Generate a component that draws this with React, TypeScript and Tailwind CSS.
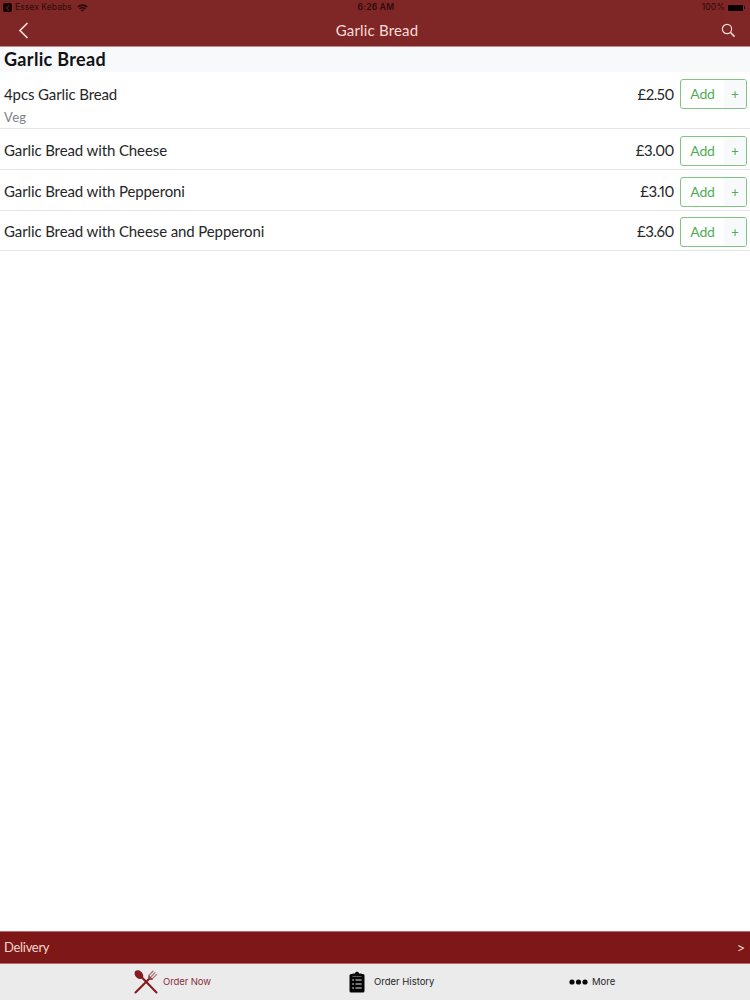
import { useState } from "react";

interface MenuItem {
  id: number;
  name: string;
  note?: string;
  price: number;
}

const items: MenuItem[] = [
  { id: 1, name: "4pcs Garlic Bread", note: "Veg", price: 2.5 },
  { id: 2, name: "Garlic Bread with Cheese", price: 3 },
  { id: 3, name: "Garlic Bread with Pepperoni", price: 3.1 },
  { id: 4, name: "Garlic Bread with Cheese and Pepperoni", price: 3.6 },
];

// ================= ICONS =================
function WifiIcon() {
  return (
    <svg width="11" height="8" viewBox="0 0 11 8" fill="none" stroke="#2a0b0b" strokeWidth="1.7">
      <path d="M0.8 3C3.5 0.5 7.5 0.5 10.2 3" />
      <path d="M2.6 4.8C4.3 3.3 6.7 3.3 8.4 4.8" />
      <path d="M5.5 7.8L3.9 6.2C4.8 5.4 6.2 5.4 7.1 6.2Z" fill="#2a0b0b" stroke="none" />
    </svg>
  );
}

function CutleryIcon() {
  return (
    <svg width="24" height="24" viewBox="0 0 24 24">
      <ellipse cx="4.9" cy="4.6" rx="3.6" ry="5" transform="rotate(-45 4.9 4.6)" fill="#861c20" />
      <path d="M7.5 7L22.5 22.5" stroke="#861c20" strokeWidth="2.1" strokeLinecap="round" />
      <path d="M1.5 22.5L15.5 8.5" stroke="#861c20" strokeWidth="2.1" strokeLinecap="round" />
      <path
        d="M15 5.4L18.9 1.3M17.2 6.6L21 2.6M18.6 8.4L22.6 4.6"
        fill="none"
        stroke="#a87774"
        strokeWidth="1.3"
        strokeLinecap="round"
      />
      <path d="M14.6 5L19.2 9.2C17.4 11 12.8 9.6 14.6 5Z" fill="#954448" />
    </svg>
  );
}

function ClipboardIcon() {
  return (
    <svg width="16" height="22" viewBox="0 0 16 22">
      <rect x="0.5" y="3" width="15" height="18.5" rx="1.5" fill="#050505" />
      <path d="M3.5 5V2.5H6C6 0 10 0 10 2.5H12.5V5Z" fill="#050505" />
      <path d="M3.5 5.5H12.5" stroke="#85817f" strokeWidth="0.7" />
      <path d="M3.2 9H5M3.2 13H5M3.2 17H5M6.5 9H12.7M6.5 13H12.7M6.5 17H12.7" stroke="#e5e2e0" strokeWidth="1.2" />
    </svg>
  );
}

export default function App() {
  const [basket, setBasket] = useState<number[]>([]);

  const addItem = (id: number) => {
    setBasket((prev) => [...prev, id]);
  };

  return (
    <div className="flex h-screen flex-col bg-white font-['Lato',sans-serif] text-[#252628]">
      {/* HEADER */}
      <header className="h-[47px] shrink-0 border-b border-[#bb8b8b] bg-[#7f2626]">
        <div className="grid h-[15px] grid-cols-3 items-center pr-[5px] pl-[3px] font-['Inter',sans-serif] text-[8px] text-[#2f0b0b]">
          <div className="flex items-center">
            <span className="flex h-[9px] w-[9px] items-center justify-center rounded-[2px] bg-[#160505]">
              <svg width="5" height="6" viewBox="0 0 5 6" fill="none" stroke="#7f2626">
                <path d="M4 0.7L1.3 3L4 5.3" />
              </svg>
            </span>
            <span className="ml-[3px] text-[8.5px] tracking-[0.08px]">Essex Kebabs</span>
            <span className="ml-[5px]">
              <WifiIcon />
            </span>
          </div>
          <span className="pl-1 text-center text-[8.5px] font-semibold tracking-[0.25px]">6:26 AM</span>
          <div className="flex items-center justify-end">
            <span className="mr-[3px] text-[8.5px] tracking-[0.2px]">100%</span>
            <span className="h-[6px] w-[15px] rounded-[1px] bg-[#080202]" />
            <span className="ml-px h-[3px] w-px bg-[#2f0b0b]" />
          </div>
        </div>
        <div className="grid h-[31px] grid-cols-[40px_1fr_36px] items-center text-[#f8dcd5]">
          <button className="pl-[18px]" aria-label="Back">
            <svg width="11" height="17" viewBox="0 0 11 17" fill="none" stroke="currentColor" strokeWidth="1.7">
              <path d="M9.5 1L2 8.5L9.5 16" />
            </svg>
          </button>
          <h1 className="text-center text-[15px] tracking-[0.18px]">Garlic Bread</h1>
          <button className="pl-[7px]" aria-label="Search">
            <svg width="15" height="15" viewBox="0 0 15 15" fill="none" stroke="currentColor" strokeWidth="1.2">
              <circle cx="6" cy="6" r="4.6" />
              <path d="M9.3 9.3L13.6 13.6" strokeWidth="1.6" />
            </svg>
          </button>
        </div>
      </header>

      {/* MENU */}
      <main className="flex-1">
        <h2 className="h-[25px] bg-[#f8f9fb] pl-1 text-[18px] leading-[25px] font-bold tracking-[0.33px] text-[#111214]">
          Garlic Bread
        </h2>
        {items.map((item) => (
          <div
            key={item.id}
            className={`flex items-start justify-between border-b border-[#e4e4e7] pr-[3px] pl-1 last:h-10 last:pt-[6px] ${
              item.note ? "h-[57px] pt-[7px]" : "h-[41px] pt-[7px]"
            }`}
          >
            <div className="text-[15px] tracking-[-0.11px]">
              <p className={item.note ? "leading-[30px]" : "leading-7"}>{item.name}</p>
              {item.note && (
                <p className="-mt-[2px] text-[13px] leading-5 tracking-[0.3px] text-[#808187]">{item.note}</p>
              )}
            </div>
            <div className="flex items-start">
              <span
                className={`mr-[6px] text-[15px] tracking-[-0.45px] proportional-nums ${
                  item.note ? "leading-[30px]" : "leading-7"
                }`}
              >
                £{item.price.toFixed(2)}
              </span>
              <button
                onClick={() => addItem(item.id)}
                className="flex h-[30px] w-[67px] overflow-hidden rounded-[3px] border border-[#7fc47f] bg-white text-[#51ad55]"
              >
                <span className="flex h-full w-[43px] items-center justify-center pb-px text-[14px] tracking-[-0.2px]">
                  Add
                </span>
                <span className="flex h-full flex-1 items-center justify-center bg-[#f8f9fb] pt-px text-[13px]">+</span>
              </button>
            </div>
          </div>
        ))}
      </main>

      {/* DELIVERY BAR */}
      <div className="flex h-[33px] shrink-0 items-center justify-between border-y border-[#b66d69] bg-[#7e1717] pr-[5px] pl-1 text-[13px] text-[#f4d8cf]">
        <span className="tracking-[-0.3px]">Delivery</span>
        <span className="font-['Inter',sans-serif] text-[12px]">&gt;</span>
      </div>

      {/* TABS */}
      <nav className="flex h-9 shrink-0 bg-[#ebebeb] font-['Inter',sans-serif] text-[9.5px] text-[#262626]">
        <button className="flex w-[240px] items-center pl-[134px] text-[#8b2d43]">
          <CutleryIcon />
          <span className="ml-[5px] pt-px tracking-[-0.1px]">Order Now</span>
        </button>
        <button className="flex w-[270px] items-center pl-[109px]">
          <ClipboardIcon />
          <span className="ml-[9px] pt-px">Order History</span>
        </button>
        <button className="flex flex-1 items-center pl-[59px]">
          <svg width="19" height="6" viewBox="0 0 19 6" fill="#080808">
            <circle cx="3" cy="3" r="2.6" />
            <circle cx="9.5" cy="3" r="2.6" />
            <circle cx="16" cy="3" r="2.6" />
          </svg>
          <span className="ml-1 pt-px">More</span>
        </button>
      </nav>
    </div>
  );
}
